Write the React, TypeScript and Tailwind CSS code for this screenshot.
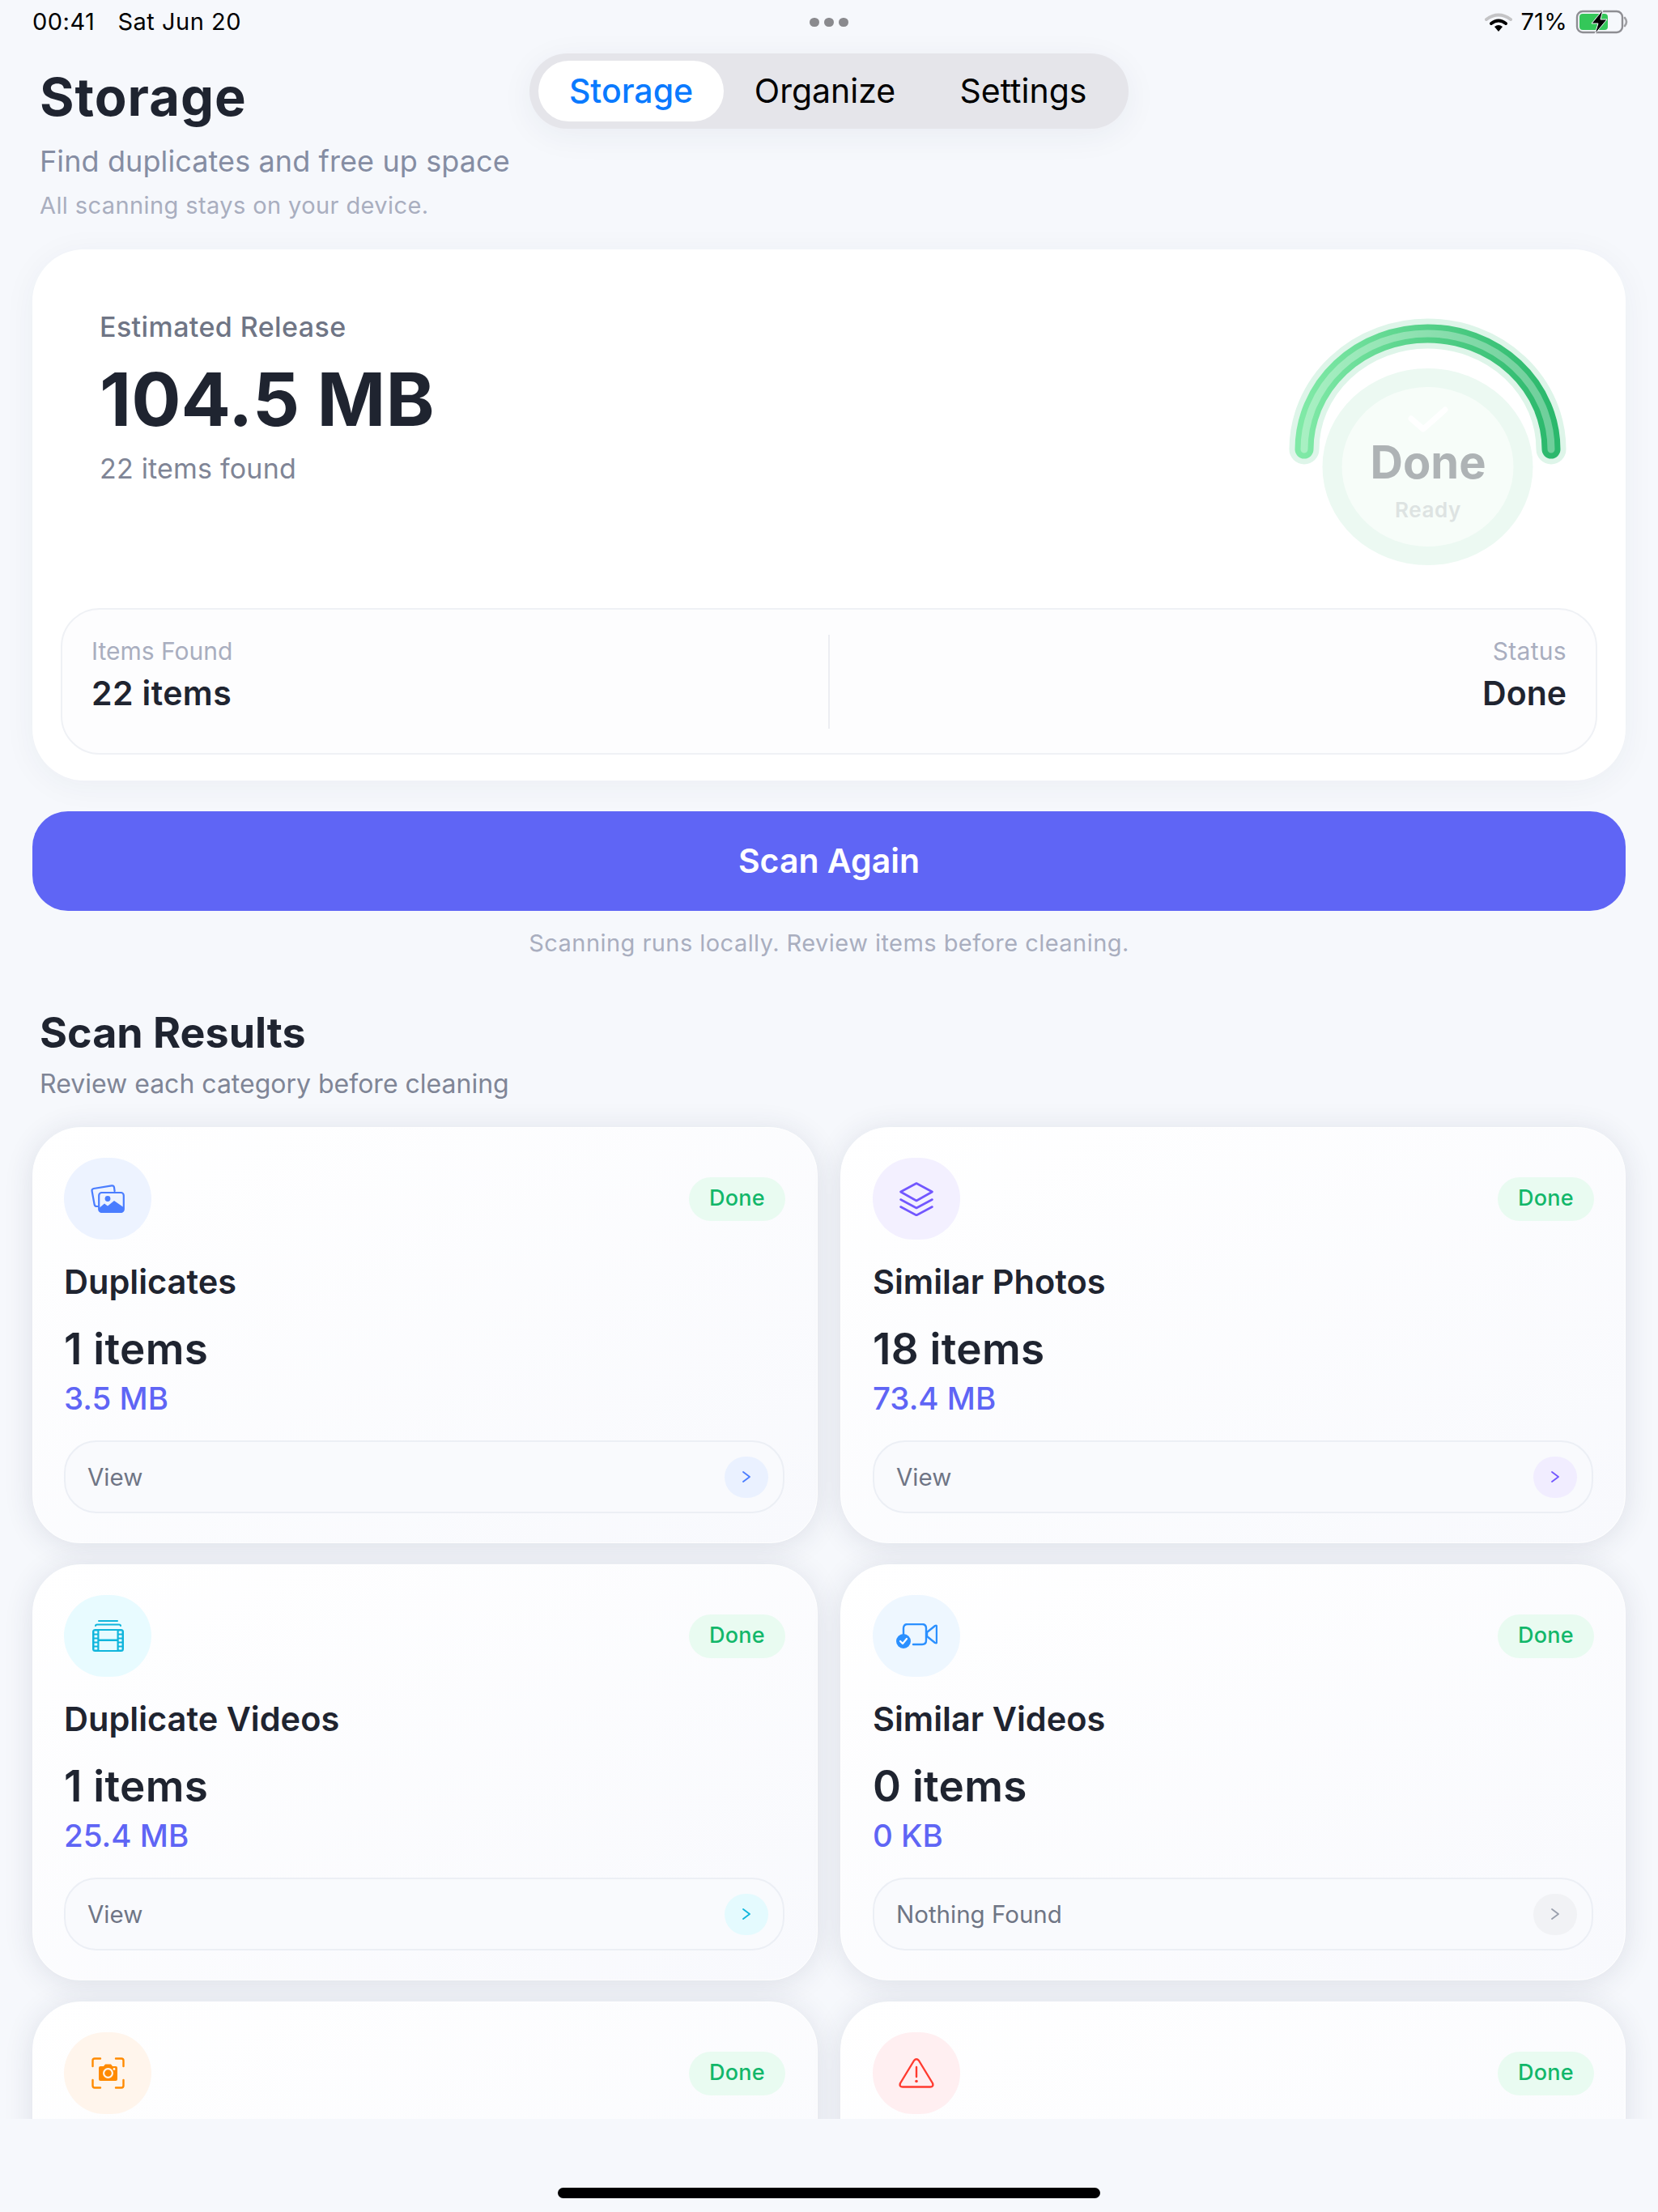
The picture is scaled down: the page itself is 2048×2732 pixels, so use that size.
import React from "react";

const DuplicatesIcon = () => (
  <svg width="42" height="35" viewBox="0 0 42 35" fill="none">
    <path d="M9 27 L7.5 27 Q5 27 4.6 24.5 L1.6 8 Q1.2 5.5 3.7 5 L26 1.4 Q28.5 1 29 3.5 L29.6 8" stroke="#4a7dff" strokeWidth="2.2" strokeLinecap="round" />
    <rect x="10.2" y="10" width="30.6" height="24" rx="3.5" stroke="#4a7dff" strokeWidth="2.2" />
    <circle cx="21" cy="17.5" r="3.4" fill="#4a7dff" />
    <path d="M10.5 29 L17 23.5 L21 26.5 L29 20 L40.5 28 L40.5 31 Q40.5 34 37.5 34 L13.5 34 Q10.5 34 10.5 31 Z" fill="#4a7dff" />
  </svg>
);

const LayersIcon = () => (
  <svg width="42" height="42" viewBox="0 0 42 42" fill="none" stroke="#7257ff" strokeWidth="2.6" strokeLinecap="round" strokeLinejoin="round">
    <path d="M21 1.5 L40.5 12 L21 23 L1.5 12 Z" />
    <path d="M1.5 21.5 L21 32 L40.5 21.5" />
    <path d="M1.5 30.5 L21 41 L40.5 30.5" />
  </svg>
);

const FilmIcon = () => (
  <svg width="41" height="40" viewBox="0 0 41 40" fill="none">
    <path d="M9 1 H32" stroke="#10b5dc" strokeWidth="2" strokeLinecap="round" />
    <path d="M5 7 Q5 5.5 7 5.5 H34 Q36 5.5 36 7" stroke="#10b5dc" strokeWidth="2" strokeLinecap="round" />
    <rect x="1" y="11" width="39" height="28" rx="3.5" fill="#10b5dc" />
    <rect x="9.5" y="13" width="22" height="10.5" fill="#e8fbff" />
    <rect x="9.5" y="26" width="22" height="11" fill="#e8fbff" />
    {[13.5, 18.5, 23.5, 28.5, 33.5].map((y) => (
      <React.Fragment key={y}>
        <rect x="3.5" y={y} width="3.8" height="3" fill="#e8fbff" />
        <rect x="33.7" y={y} width="3.8" height="3" fill="#e8fbff" />
      </React.Fragment>
    ))}
  </svg>
);

const VideoIcon = () => (
  <svg width="51" height="31" viewBox="0 0 51 31" fill="none">
    <path d="M9 14 V6 Q9 1 14 1 H32 Q37 1 37 6 V21 Q37 26 32 26 H21" stroke="#2b90ff" strokeWidth="2.4" strokeLinecap="round" />
    <path d="M38 11 L48 3 Q50 2 50 4 V23 Q50 25 48 24 L38 16 Z" stroke="#2b90ff" strokeWidth="2.4" strokeLinejoin="round" />
    <circle cx="9" cy="22" r="9" fill="#2b90ff" />
    <path d="M5 22 L8 25 L13 19" stroke="#fff" strokeWidth="2.2" strokeLinecap="round" strokeLinejoin="round" />
  </svg>
);

const CameraIcon = () => (
  <svg width="41" height="39" viewBox="0 0 41 39" fill="none">
    <path d="M1.5 11 V4 Q1.5 1.5 4 1.5 H11 M30 1.5 H37 Q39.5 1.5 39.5 4 V11 M1.5 28 V35 Q1.5 37.5 4 37.5 H11 M30 37.5 H37 Q39.5 37.5 39.5 35 V28" stroke="#ff8a00" strokeWidth="2.4" strokeLinecap="round" />
    <path d="M9 13 Q9 11 11 11 H15 L17 8.5 H24 L26 11 H30 Q32 11 32 13 V27 Q32 29 30 29 H11 Q9 29 9 27 Z" fill="#ff8a00" />
    <circle cx="20.5" cy="19.5" r="5.4" stroke="#fff5ec" strokeWidth="2.2" />
    <circle cx="28" cy="14.5" r="1.4" fill="#fff5ec" />
  </svg>
);

const WarningIcon = () => (
  <svg width="44" height="37" viewBox="0 0 44 37" fill="none">
    <path d="M19 3 Q22 -0.5 25 3 L42 31 Q43.5 35.5 39 35.5 H5 Q0.5 35.5 2 31 Z" stroke="#ff3b30" strokeWidth="2.4" strokeLinejoin="round" />
    <path d="M22 11 V23" stroke="#ff3b30" strokeWidth="2.4" strokeLinecap="round" />
    <circle cx="22" cy="28.5" r="1.8" fill="#ff3b30" />
  </svg>
);

type Card = {
  icon: React.ReactNode;
  iconBg: string;
  title?: string;
  count?: string;
  size?: string;
  action?: string;
  chevBg?: string;
  chev?: string;
};

// the last row is cut off by the bottom bar, only icon and badge show
const cards: Card[] = [
  { title: "Duplicates", count: "1 items", size: "3.5 MB", action: "View", icon: <DuplicatesIcon />, iconBg: "bg-[#edf3ff]", chevBg: "bg-[#eaf1ff]", chev: "#4a7dff" },
  { title: "Similar Photos", count: "18 items", size: "73.4 MB", action: "View", icon: <LayersIcon />, iconBg: "bg-[#f3f0ff]", chevBg: "bg-[#f1edff]", chev: "#7257ff" },
  { title: "Duplicate Videos", count: "1 items", size: "25.4 MB", action: "View", icon: <FilmIcon />, iconBg: "bg-[#e8fbff]", chevBg: "bg-[#e4fafe]", chev: "#10b5dc" },
  { title: "Similar Videos", count: "0 items", size: "0 KB", action: "Nothing Found", icon: <VideoIcon />, iconBg: "bg-[#eef7ff]", chevBg: "bg-[#f1f2f5]", chev: "#9aa0ad" },
  { icon: <CameraIcon />, iconBg: "bg-[#fff5ec]" },
  { icon: <WarningIcon />, iconBg: "bg-[#ffeff1]" },
];

const Gauge = () => (
  <div className="relative w-[360px] h-[320px] mt-[47px] mr-[29px]">
    <svg width="360" height="320" viewBox="0 0 360 320" fill="none">
      <defs>
        <linearGradient id="arc" x1="0" y1="0" x2="1" y2="0">
          <stop offset="0" stopColor="#7fe9a6" />
          <stop offset="1" stopColor="#2bb86c" />
        </linearGradient>
      </defs>
      <ellipse cx="179.5" cy="186.5" rx="130" ry="121.5" fill="#ecf9f2" />
      <ellipse cx="179.5" cy="186.5" rx="106" ry="98.5" fill="#f7fdf9" />
      <path d="M159 127 L174 140 L201 116" stroke="#ffffff" strokeWidth="7" strokeLinecap="round" strokeLinejoin="round" />
      <path d="M27 165 A152.5 143 0 0 1 332 165" stroke="#def5e9" strokeWidth="37" strokeLinecap="round" />
      <path d="M27 165 A152.5 143 0 0 1 332 165" stroke="url(#arc)" strokeWidth="23" strokeLinecap="round" />
      <path d="M27 165 A152.5 143 0 0 1 332 165" stroke="#ffffff" strokeOpacity="0.32" strokeWidth="9" strokeLinecap="round" />
    </svg>
    <div className="absolute left-0 right-0 top-[151px] text-center text-[56px] leading-[60px] font-bold text-[#aeb3b5]">Done</div>
    <div className="absolute left-0 right-0 top-[224px] text-center text-[26px] leading-[32px] font-semibold tracking-[0.6px] text-[#dde3e2]">Ready</div>
  </div>
);

const ResultCard = ({ card, right }: { card: Card; right: boolean }) => (
  <div className={`h-[514px] rounded-[60px] pt-[37px] bg-gradient-to-br from-white to-[#f8f9fd] border border-white shadow-[0_4px_36px_rgba(40,50,80,0.12)] ${right ? "pl-[39px] pr-[38px]" : "pl-[38px] pr-[39px]"}`}>
    <div className="flex items-center justify-between">
      <div className={`w-[108px] h-[101px] rounded-full flex items-center justify-center ${card.iconBg}`}>{card.icon}</div>
      <div className="w-[119px] h-[54px] rounded-full bg-[#e9fbf1] flex items-center justify-center text-[27px] font-medium tracking-[0.3px] text-[#12b76a]">Done</div>
    </div>
    {card.title && (
      <>
        <div className="mt-[26px] text-[41.5px] leading-[52px] font-semibold text-[#1f2430]">{card.title}</div>
        <div className="mt-[26px] text-[53px] leading-[62px] font-semibold tracking-[0.3px] text-[#1f2430]">{card.count}</div>
        <div className="mt-[6px] text-[38.5px] leading-[48px] font-medium text-[#5f65f5]">{card.size}</div>
        <div className="mt-[28px] h-[90px] mr-[1px] rounded-[40px] border-2 border-[#eceff5] bg-[#f9fafd] flex items-center justify-between pl-[27px] pr-[18px]">
          <span className="text-[29.5px] text-[#6f7585]">{card.action}</span>
          <span className={`w-[54px] h-[51px] rounded-full flex items-center justify-center ${card.chevBg}`}>
            <svg width="10" height="14" viewBox="0 0 10 14" fill="none">
              <path d="M1 1 L9 7 L1 13" stroke={card.chev} strokeWidth="1.8" strokeLinecap="round" strokeLinejoin="round" />
            </svg>
          </span>
        </div>
      </>
    )}
  </div>
);

const App: React.FC = () => {
  return (
    <div className="w-[2048px] h-[2732px] overflow-hidden flex flex-col bg-[#f6f8fc] font-[Inter,sans-serif]">
      <div className="h-[2617px] shrink-0 overflow-hidden">
        {/* Status bar */}
        <div className="h-[54px] flex items-center justify-between pl-[40px] pr-[36px] text-[29px] text-black">
          <div className="flex gap-[28px] flex-1 tracking-[0.5px]">
            <span>00:41</span>
            <span>Sat Jun 20</span>
          </div>
          <div className="flex gap-[6px] -translate-x-[2px]">
            <span className="w-[12px] h-[11px] rounded-full bg-[#8a8a8e]" />
            <span className="w-[12px] h-[11px] rounded-full bg-[#8a8a8e]" />
            <span className="w-[12px] h-[11px] rounded-full bg-[#8a8a8e]" />
          </div>
          <div className="flex flex-1 items-center justify-end gap-[10px]">
            <svg width="34" height="23" viewBox="0 0 34 23" fill="none">
              <path d="M2 8 Q17 -3 32 8" stroke="#c4c4c6" strokeWidth="4" strokeLinecap="round" />
              <path d="M8 13 Q17 6 26 13" stroke="#000" strokeWidth="4" strokeLinecap="round" />
              <path d="M12 17 L17 23 L22 17 Q17 13 12 17 Z" fill="#000" />
            </svg>
            <span className="tracking-[0.3px]">71%</span>
            <svg width="66" height="30" viewBox="0 0 66 30" fill="none">
              <rect x="2" y="2" width="56" height="26" rx="7" stroke="#8e8e93" strokeWidth="2.4" />
              <rect x="5" y="5" width="35" height="20" rx="4" fill="#34c759" />
              <path d="M61 10 Q65 15 61 20" stroke="#a0a0a4" strokeWidth="2.6" strokeLinecap="round" />
              <path d="M34 0 L20 17 H28 L24 30 L39 12 H31 Z" fill="#000" stroke="#f6f8fc" strokeWidth="1" />
            </svg>
          </div>
        </div>

        {/* Header */}
        <div className="grid grid-cols-[654px_740px_1fr]">
          <div className="pl-[49px] pt-[28px]">
            <div className="text-[65px] leading-[76px] font-bold tracking-[1px] text-[#1f2430]">Storage</div>
            <div className="mt-[19px] text-[36px] leading-[44px] tracking-[0.1px] text-[#858da3]">Find duplicates and free up space</div>
            <div className="mt-[13px] text-[29px] leading-[40px] tracking-[0.4px] text-[#a9aebf]">All scanning stays on your device.</div>
          </div>
          <div className="mt-[12px] h-[93px] rounded-full bg-[#e5e5ea] flex items-center pl-[11px] shadow-[0_8px_40px_rgba(40,50,80,0.06)]">
            <div className="w-[229px] h-[75px] rounded-full bg-white flex items-center justify-center text-[41px] font-medium text-[#0a7aff]">Storage</div>
            <div className="w-[250px] text-center text-[41px] text-black">Organize</div>
            <div className="w-[240px] text-center text-[41px] text-black">Settings</div>
          </div>
        </div>

        {/* Main */}
        <div className="px-[40px] mt-[34px]">
          <div className="h-[656px] rounded-[64px] bg-white p-[35px] pb-[32px] shadow-[0_6px_40px_rgba(40,50,80,0.05)]">
            <div className="h-[408px] flex items-start justify-between">
              <div className="pl-[48px] pt-[39px]">
                <div className="text-[34px] leading-[44px] font-medium tracking-[0.4px] text-[#6f7585]">Estimated Release</div>
                <div className="mt-[17px] text-[91px] leading-[100px] font-bold text-[#1f2430]">104.5 MB</div>
                <div className="mt-[14px] text-[34px] leading-[44px] tracking-[0.2px] text-[#7f8596]">22 items found</div>
              </div>
              <Gauge />
            </div>
            <div className="h-[181px] rounded-[48px] border-2 border-[#eff1f5] bg-[#fdfdfe] grid grid-cols-[1fr_2px_1fr] items-start pt-[31px] px-[36px]">
              <div>
                <div className="text-[30px] leading-[40px] text-[#a9aebf]">Items Found</div>
                <div className="mt-[7px] text-[41px] leading-[50px] font-semibold tracking-[0.4px] text-[#1f2430]">22 items</div>
              </div>
              <div className="h-[116px] bg-[#eceef2]" />
              <div className="text-right">
                <div className="text-[30px] leading-[40px] tracking-[0.3px] text-[#a9aebf]">Status</div>
                <div className="mt-[7px] text-[41px] leading-[50px] font-semibold text-[#1f2430]">Done</div>
              </div>
            </div>
          </div>

          <div className="mt-[38px] h-[123px] rounded-[44px] bg-[#5f65f5] flex items-center justify-center text-[41px] font-semibold text-white">Scan Again</div>
          <div className="mt-[20px] text-center text-[29px] leading-[40px] tracking-[0.45px] text-[#a9aebf]">Scanning runs locally. Review items before cleaning.</div>

          <div className="mt-[61px] pl-[9px] text-[52px] leading-[60px] font-bold text-[#1f2430]">Scan Results</div>
          <div className="mt-[11px] pl-[9px] text-[32px] leading-[44px] text-[#7f8596]">Review each category before cleaning</div>

          <div className="mt-[31px] grid grid-cols-2 gap-x-[28px] gap-y-[26px]">
            {cards.map((card, index) => (
              <ResultCard key={index} card={card} right={index % 2 === 1} />
            ))}
          </div>
        </div>
      </div>

      {/* Home indicator */}
      <div className="flex-1 relative z-10 bg-[#f6f8fc] flex justify-center pt-[85px]">
        <div className="w-[670px] h-[13px] rounded-full bg-black" />
      </div>
    </div>
  );
};

export default App;
